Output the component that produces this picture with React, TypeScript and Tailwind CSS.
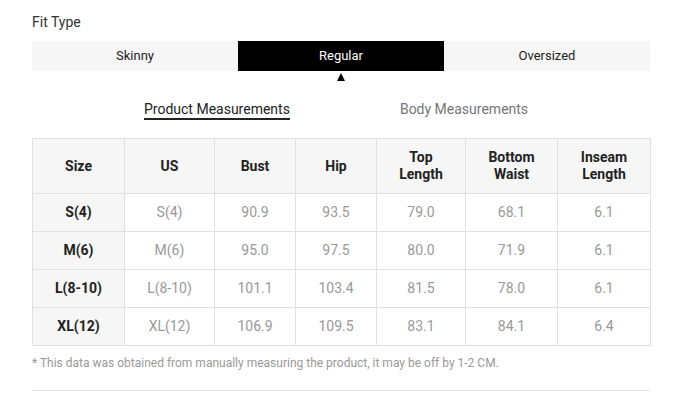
import React from "react";

const cols = [92, 90, 81, 81, 89, 92, 93];
const headers: string[][] = [["Size"], ["US"], ["Bust"], ["Hip"], ["Top", "Length"], ["Bottom", "Waist"], ["Inseam", "Length"]];
const rows = [
  ["S(4)", "S(4)", "90.9", "93.5", "79.0", "68.1", "6.1"],
  ["M(6)", "M(6)", "95.0", "97.5", "80.0", "71.9", "6.1"],
  ["L(8-10)", "L(8-10)", "101.1", "103.4", "81.5", "78.0", "6.1"],
  ["XL(12)", "XL(12)", "106.9", "109.5", "83.1", "84.1", "6.4"],
];

export default function App() {
  return (
    <div className="w-[676px] h-[394px] bg-white px-[32px] pt-[12px]" style={{ fontFamily: "Roboto, 'Liberation Sans', sans-serif" }}>
      <div className="w-[618px]">
        <div className="text-[14px] leading-[20px] text-[#333]">Fit Type</div>
        <div className="mt-[9px] grid grid-cols-3 h-[30px] text-[13px]">
          <div className="bg-[#f6f6f6] text-[#222] flex items-center justify-center">Skinny</div>
          <div className="bg-black text-white flex items-center justify-center relative">
            Regular
            <div className="absolute left-1/2 -translate-x-1/2 top-[32px] w-0 h-0 border-l-[4.5px] border-r-[4.5px] border-b-[8px] border-l-transparent border-r-transparent border-b-black" />
          </div>
          <div className="bg-[#f6f6f6] text-[#222] flex items-center justify-center">Oversized</div>
        </div>
        <div className="mt-[30px] flex items-start gap-[110px] pl-[112px] text-[14px] leading-[16px]">
          <div className="text-[#222] border-b-2 border-[#222] pb-[1px]">Product Measurements</div>
          <div className="text-[#767676]">Body Measurements</div>
        </div>
        <table className="mt-[18px] border-collapse table-fixed w-[618px] text-[14px] text-center">
          <colgroup>
            {cols.map((w, i) => (
              <col key={i} style={{ width: w }} />
            ))}
          </colgroup>
          <thead>
            <tr className="h-[55px] bg-[#f6f6f6]">
              {headers.map((h, i) => (
                <th key={i} className="border border-[#e0e0e0] font-bold text-[#222] leading-[17px] p-0">
                  {h.map((l, j) => (
                    <div key={j}>{l}</div>
                  ))}
                </th>
              ))}
            </tr>
          </thead>
          <tbody>
            {rows.map((r, i) => (
              <tr key={i} className="h-[38px]">
                {r.map((c, j) => (
                  <td
                    key={j}
                    className={
                      "border border-[#e0e0e0] p-0 " +
                      (j === 0 ? "bg-[#f6f6f6] font-bold text-[#222]" : "text-[#999]")
                    }
                  >
                    {c}
                  </td>
                ))}
              </tr>
            ))}
          </tbody>
        </table>
        <div className="mt-[9px] text-[12px] leading-[16px] text-[#999]">
          * This data was obtained from manually measuring the product, it may be off by 1-2 CM.
        </div>
        <div className="mt-[19px] border-t border-[#e5e5e5]" />
      </div>
    </div>
  );
}
